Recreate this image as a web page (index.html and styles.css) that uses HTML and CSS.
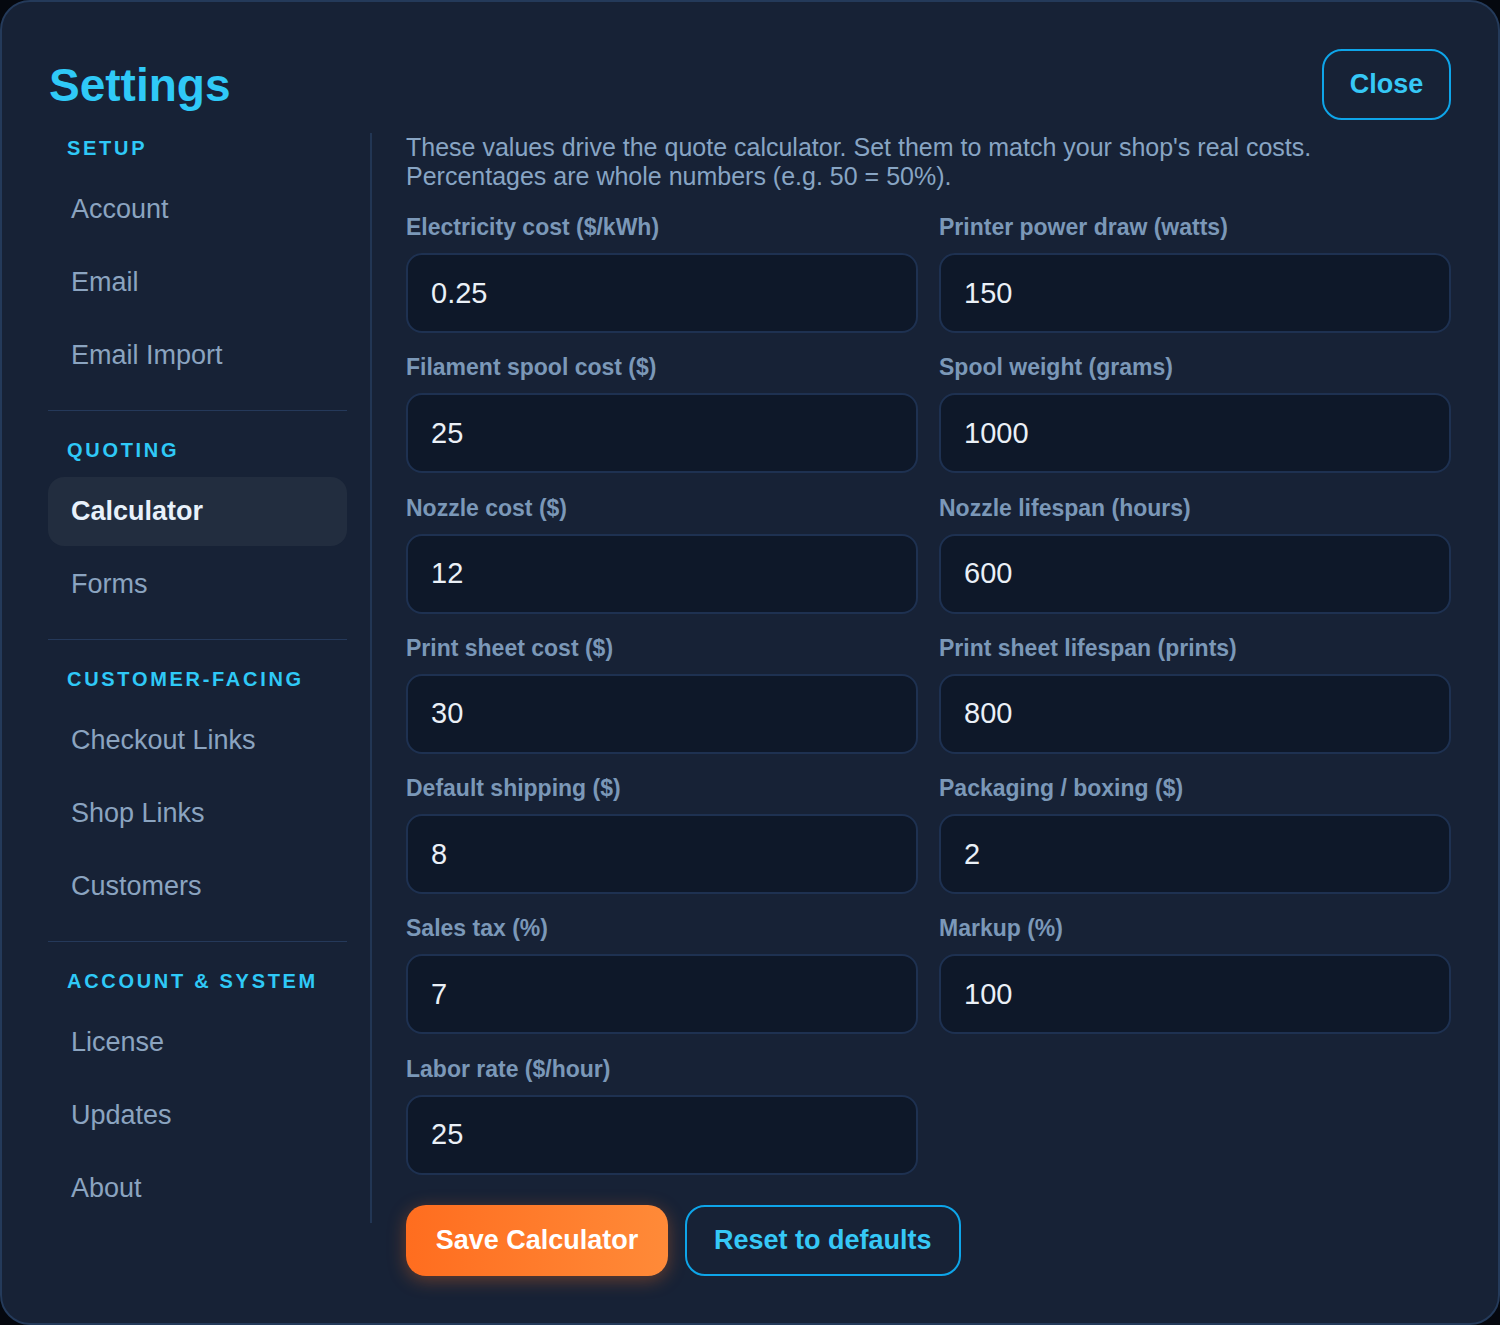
FILE: index.html
```html
<!DOCTYPE html>
<html lang="en">
<head>
    <meta charset="UTF-8">
    <meta name="viewport" content="width=device-width, initial-scale=1.0">
    <title>Settings</title>
    <link rel="stylesheet" href="styles.css">
</head>
<body>

    <div class="modal">
        <div class="modal-header">
            <h1 class="title">Settings</h1>
            <button class="btn-outline close">Close</button>
        </div>

        <div class="modal-body">
            <nav class="sidebar">
                <div class="group">
                    <div class="group-title">Setup</div>
                    <a class="nav-item">Account</a>
                    <a class="nav-item">Email</a>
                    <a class="nav-item">Email Import</a>
                </div>
                <div class="group">
                    <div class="group-title">Quoting</div>
                    <a class="nav-item active">Calculator</a>
                    <a class="nav-item">Forms</a>
                </div>
                <div class="group">
                    <div class="group-title">Customer-Facing</div>
                    <a class="nav-item">Checkout Links</a>
                    <a class="nav-item">Shop Links</a>
                    <a class="nav-item">Customers</a>
                </div>
                <div class="group">
                    <div class="group-title">Account &amp; System</div>
                    <a class="nav-item">License</a>
                    <a class="nav-item">Updates</a>
                    <a class="nav-item">About</a>
                </div>
            </nav>

            <section class="content">
                <p class="intro">These values drive the quote calculator. Set them to match your shop's real costs. Percentages are whole numbers (e.g. 50 = 50%).</p>

                <div class="fields">
                    <label class="field">
                        <span>Electricity cost ($/kWh)</span>
                        <input type="text" value="0.25">
                    </label>
                    <label class="field">
                        <span>Printer power draw (watts)</span>
                        <input type="text" value="150">
                    </label>
                    <label class="field">
                        <span>Filament spool cost ($)</span>
                        <input type="text" value="25">
                    </label>
                    <label class="field">
                        <span>Spool weight (grams)</span>
                        <input type="text" value="1000">
                    </label>
                    <label class="field">
                        <span>Nozzle cost ($)</span>
                        <input type="text" value="12">
                    </label>
                    <label class="field">
                        <span>Nozzle lifespan (hours)</span>
                        <input type="text" value="600">
                    </label>
                    <label class="field">
                        <span>Print sheet cost ($)</span>
                        <input type="text" value="30">
                    </label>
                    <label class="field">
                        <span>Print sheet lifespan (prints)</span>
                        <input type="text" value="800">
                    </label>
                    <label class="field">
                        <span>Default shipping ($)</span>
                        <input type="text" value="8">
                    </label>
                    <label class="field">
                        <span>Packaging / boxing ($)</span>
                        <input type="text" value="2">
                    </label>
                    <label class="field">
                        <span>Sales tax (%)</span>
                        <input type="text" value="7">
                    </label>
                    <label class="field">
                        <span>Markup (%)</span>
                        <input type="text" value="100">
                    </label>
                    <label class="field">
                        <span>Labor rate ($/hour)</span>
                        <input type="text" value="25">
                    </label>
                </div>

                <div class="actions">
                    <button class="btn-primary">Save Calculator</button>
                    <button class="btn-outline">Reset to defaults</button>
                </div>
            </section>
        </div>
    </div>

</body>
</html>
```

FILE: styles.css
```css
* {
    margin: 0;
    padding: 0;
    box-sizing: border-box;
}

body {
    font-family: 'Liberation Sans', Arial, sans-serif;
    background-color: #05080f;
    width: 1500px;
    height: 1325px;
    overflow: hidden;
}

.modal {
    width: 1500px;
    height: 1325px;
    background-color: #172236;
    border: 2px solid #243a5a;
    border-radius: 30px;
    padding: 47px 47px 0 46px;
}

/* Kepala modal */
.modal-header {
    display: flex;
    justify-content: space-between;
    align-items: center;
    height: 71px;
    margin-bottom: 13px;
}

.title {
    font-size: 46px;
    font-weight: bold;
    color: #2fc9f7;
    padding-left: 1px;
}

button {
    font-family: inherit;
    font-weight: bold;
    font-size: 27px;
    cursor: pointer;
    height: 71px;
    border-radius: 20px;
}

.btn-outline {
    background: transparent;
    border: 2px solid #0ea5e9;
    color: #36c8f6;
    padding: 0 27px;
}

.close {
    width: 129px;
    padding: 0;
}

.btn-primary {
    background: linear-gradient(90deg, #ff6d1f, #ff8a38);
    border: none;
    color: #ffffff;
    width: 262px;
    box-shadow: 0 4px 18px rgba(255, 115, 35, 0.35);
}

/* Isi modal */
.modal-body {
    display: flex;
    align-items: flex-start;
}

.sidebar {
    width: 324px;
    padding-right: 23px;
    border-right: 2px solid #223654;
    flex-shrink: 0;
}

.group + .group {
    border-top: 1px solid #25395a;
    margin-top: 20px;
    padding-top: 24px;
}

.group-title {
    font-size: 20px;
    line-height: 30px;
    font-weight: bold;
    letter-spacing: 2.7px;
    text-transform: uppercase;
    color: #2fc9f7;
    padding-left: 19px;
    margin-bottom: 12px;
}

.nav-item {
    display: flex;
    align-items: center;
    height: 69px;
    margin-bottom: 4px;
    padding-left: 23px;
    font-size: 27px;
    color: #8ba4c0;
    border-radius: 16px;
}

.group .nav-item:last-child {
    margin-bottom: 0;
}

.nav-item.active {
    background-color: #222d3f;
    color: #e8f1fb;
    font-weight: bold;
}

.content {
    flex: 1;
    padding-left: 34px;
}

.intro {
    font-size: 25px;
    line-height: 29px;
    color: #88a5c4;
    margin-bottom: 23px;
}

.fields {
    display: grid;
    grid-template-columns: 1fr 1fr;
    gap: 21.3px 21px;
}

.field span {
    display: block;
    font-size: 23px;
    line-height: 26px;
    font-weight: bold;
    color: #7b98b8;
    margin-bottom: 13px;
}

.field input {
    width: 100%;
    height: 80px;
    background-color: #0e1829;
    border: 2px solid #1e3151;
    border-radius: 16px;
    padding: 0 23px;
    font-family: inherit;
    font-size: 29px;
    color: #eaf0f7;
    outline: none;
}

.actions {
    display: flex;
    gap: 17px;
    margin-top: 30px;
}
```
